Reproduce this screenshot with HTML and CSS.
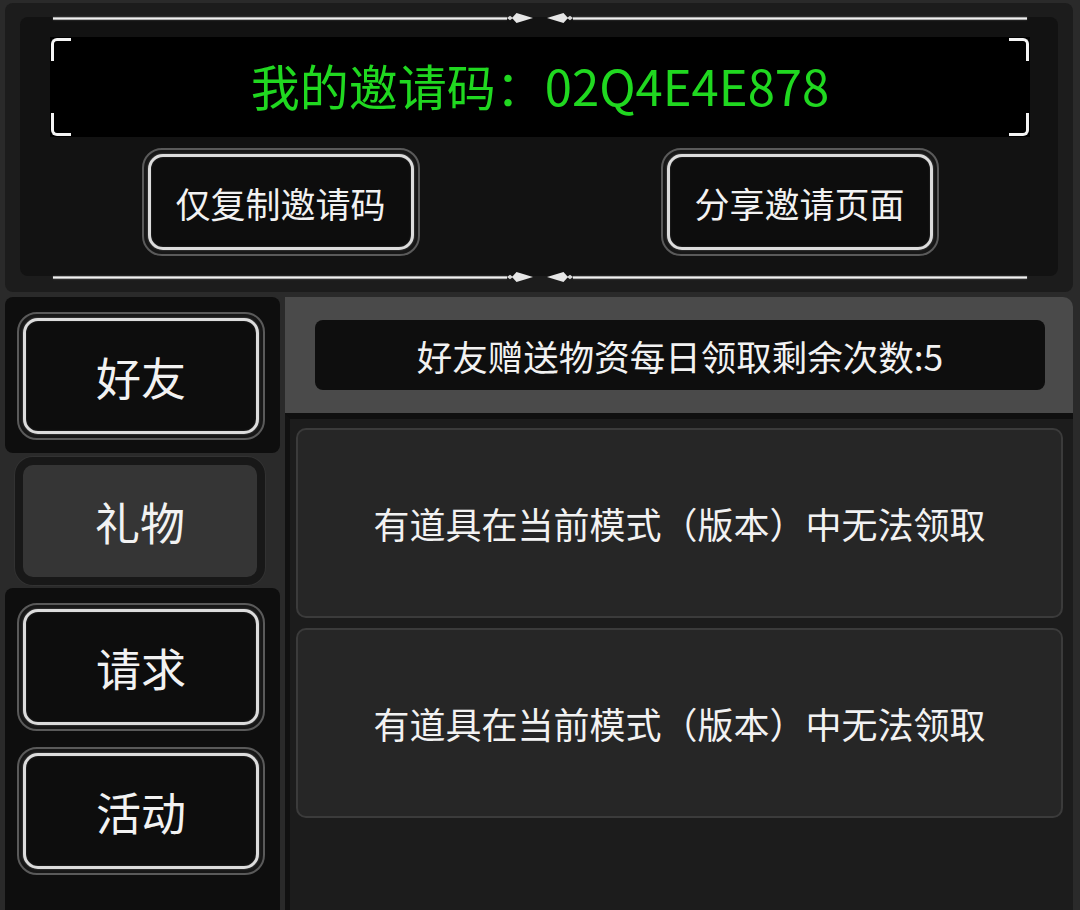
FILE: index.html
```html
<!DOCTYPE html>
<html lang="zh-CN">
<head>
<meta charset="utf-8">
<title>邀请好友</title>
<link rel="stylesheet" href="styles.css">
</head>
<body>
<div class="page">
  <section class="top-panel">
    <div class="invite-panel">
      <div class="divider">
        <span class="divider-line"></span>
        <svg class="ornament" width="66" height="14" viewBox="0 0 66 14">
          <polygon points="0,7 3,4.8 6,7 3,9.2" fill="#d6d6d6"/>
          <polygon points="5,7 9.5,2 26,7 9.5,12" fill="#e6e6e6"/>
          <polygon points="66,7 63,4.8 60,7 63,9.2" fill="#d6d6d6"/>
          <polygon points="61,7 56.5,2 40,7 56.5,12" fill="#e6e6e6"/>
        </svg>
        <span class="divider-line"></span>
      </div>
      <div class="code-box">
        <span class="corner tl"></span>
        <span class="corner tr"></span>
        <span class="corner bl"></span>
        <span class="corner br"></span>
        <span class="code-text">我的邀请码：02Q4E4E878</span>
      </div>
      <div class="actions">
        <div class="ring-btn action"><span class="ring-inner">仅复制邀请码</span></div>
        <div class="ring-btn action"><span class="ring-inner">分享邀请页面</span></div>
      </div>
      <div class="divider divider-bottom">
        <span class="divider-line"></span>
        <svg class="ornament" width="66" height="14" viewBox="0 0 66 14">
          <polygon points="0,7 3,4.8 6,7 3,9.2" fill="#d6d6d6"/>
          <polygon points="5,7 9.5,2 26,7 9.5,12" fill="#e6e6e6"/>
          <polygon points="66,7 63,4.8 60,7 63,9.2" fill="#d6d6d6"/>
          <polygon points="61,7 56.5,2 40,7 56.5,12" fill="#e6e6e6"/>
        </svg>
        <span class="divider-line"></span>
      </div>
    </div>
  </section>

  <div class="main">
    <nav class="sidebar">
      <div class="tab-group first">
        <div class="ring-btn tab"><span class="ring-inner">好友</span></div>
      </div>
      <div class="tab-selected">
        <div class="sel-btn">礼物</div>
      </div>
      <div class="tab-group last">
        <div class="ring-btn tab"><span class="ring-inner">请求</span></div>
        <div class="ring-btn tab"><span class="ring-inner">活动</span></div>
      </div>
    </nav>

    <section class="content">
      <div class="content-head">
        <div class="quota">好友赠送物资每日领取剩余次数:5</div>
      </div>
      <div class="list">
        <div class="card">有道具在当前模式（版本）中无法领取</div>
        <div class="card">有道具在当前模式（版本）中无法领取</div>
      </div>
    </section>
  </div>
</div>
</body>
</html>
```

FILE: styles.css
```css
html, body {
  margin: 0;
  padding: 0;
  height: 100%;
  overflow: hidden;
}

body {
  background: #2a2a2a;
  font-family: "Noto Sans CJK SC", "Noto Sans", sans-serif;
  color: #f2f2f2;
}

.page {
  height: 910px;
  box-sizing: border-box;
  padding: 3px 7px 0 5px;
  display: flex;
  flex-direction: column;
}

/* ---------- top invite panel ---------- */
.top-panel {
  background: #1c1c1c;
  border-radius: 8px;
  padding: 14px 15px 16px 15px;
}

.invite-panel {
  background: #121212;
  border-radius: 8px;
  height: 259px;
  box-sizing: border-box;
  padding: 0 28px 0 30px;
  display: flex;
  flex-direction: column;
}

.divider {
  height: 10px;
  margin: -4px 3px 0 3px;
  display: flex;
  align-items: center;
}

.divider-bottom {
  margin-top: 16px;
  margin-bottom: -6px;
}

.divider-line {
  flex: 1;
  height: 3px;
  background: linear-gradient(#8a8a8a, #f0f0f0 50%, #8a8a8a);
  box-shadow: 0 0 2px rgba(255, 255, 255, 0.25);
}

.ornament {
  flex: none;
  display: block;
}

.code-box {
  position: relative;
  margin-top: 14px;
  height: 100px;
  box-sizing: border-box;
  padding-bottom: 6px;
  background: #000;
  display: flex;
  align-items: center;
  justify-content: center;
}

.code-text {
  color: #20d820;
  font-size: 49px;
  line-height: 1;
  white-space: nowrap;
}

.corner {
  position: absolute;
  width: 17px;
  height: 20px;
  border-color: #f4f4f4;
  border-style: solid;
  border-width: 0;
}

.corner.tl { left: 1px; top: 1px; border-left-width: 3px; border-top-width: 3px; border-top-left-radius: 6px; }
.corner.tr { right: 1px; top: 1px; border-right-width: 3px; border-top-width: 3px; border-top-right-radius: 6px; }
.corner.bl { left: 1px; bottom: 1px; border-left-width: 3px; border-bottom-width: 3px; border-bottom-left-radius: 6px; }
.corner.br { right: 1px; bottom: 1px; border-right-width: 3px; border-bottom-width: 3px; border-bottom-right-radius: 6px; }

.actions {
  margin-top: 11px;
  display: flex;
  justify-content: center;
  gap: 241px;
}

/* ---------- ring buttons ---------- */
.ring-btn {
  box-sizing: border-box;
  border: 2px solid #5a5a5a;
  border-radius: 20px;
  padding: 4px;
  background: #171717;
  display: flex;
}

.ring-inner {
  flex: 1;
  box-sizing: border-box;
  border: 3px solid #dcdcdc;
  border-radius: 15px;
  background: #0d0d0d;
  box-shadow: 0 0 2px rgba(255, 255, 255, 0.35), inset 0 0 2px rgba(255, 255, 255, 0.2);
  display: flex;
  align-items: center;
  justify-content: center;
  white-space: nowrap;
}

.action {
  width: 278px;
  height: 108px;
}

.action .ring-inner {
  font-size: 35px;
  color: #f2f2f2;
}

/* ---------- main area ---------- */
.main {
  flex: 1;
  margin-top: 5px;
  display: flex;
  gap: 5px;
  min-height: 0;
}

.sidebar {
  width: 275px;
  flex: none;
  display: flex;
  flex-direction: column;
}

.tab-group {
  background: #0e0e0e;
  border-radius: 8px;
  padding: 15px 15px 13px 12px;
  display: flex;
  flex-direction: column;
  gap: 16px;
}

.tab-group.last {
  flex: 1;
  border-radius: 8px 8px 0 0;
}

.tab {
  width: 248px;
  height: 128px;
}

.tab .ring-inner {
  font-size: 45px;
}

.tab-selected {
  padding: 4px 15px 3px 10px;
}

.sel-btn {
  box-sizing: border-box;
  width: 250px;
  height: 128px;
  border: 8px solid #181818;
  border-radius: 18px;
  background: #353535;
  box-shadow: 0 0 0 1px #323232;
  display: flex;
  align-items: center;
  justify-content: center;
  font-size: 45px;
  color: #f2f2f2;
}

.content {
  flex: 1;
  display: flex;
  flex-direction: column;
  border-radius: 0 10px 0 0;
  overflow: hidden;
}

.content-head {
  height: 116px;
  box-sizing: border-box;
  background: #4a4a4a;
  padding: 23px 28px 0 30px;
}

.quota {
  height: 70px;
  background: #0e0e0e;
  border-radius: 8px;
  display: flex;
  align-items: center;
  justify-content: center;
  font-size: 35.5px;
  color: #f2f2f2;
  white-space: nowrap;
}

.list {
  flex: 1;
  background: #1c1c1c;
  border-top: 6px solid #0f0f0f;
  border-left: 5px solid #111;
  padding: 9px 10px 0 6px;
  display: flex;
  flex-direction: column;
  gap: 10px;
}

.card {
  height: 190px;
  box-sizing: border-box;
  background: #262626;
  border: 2px solid #3b3b3b;
  border-radius: 10px;
  display: flex;
  align-items: center;
  justify-content: center;
  font-size: 36px;
  color: #f2f2f2;
  white-space: nowrap;
}
```
